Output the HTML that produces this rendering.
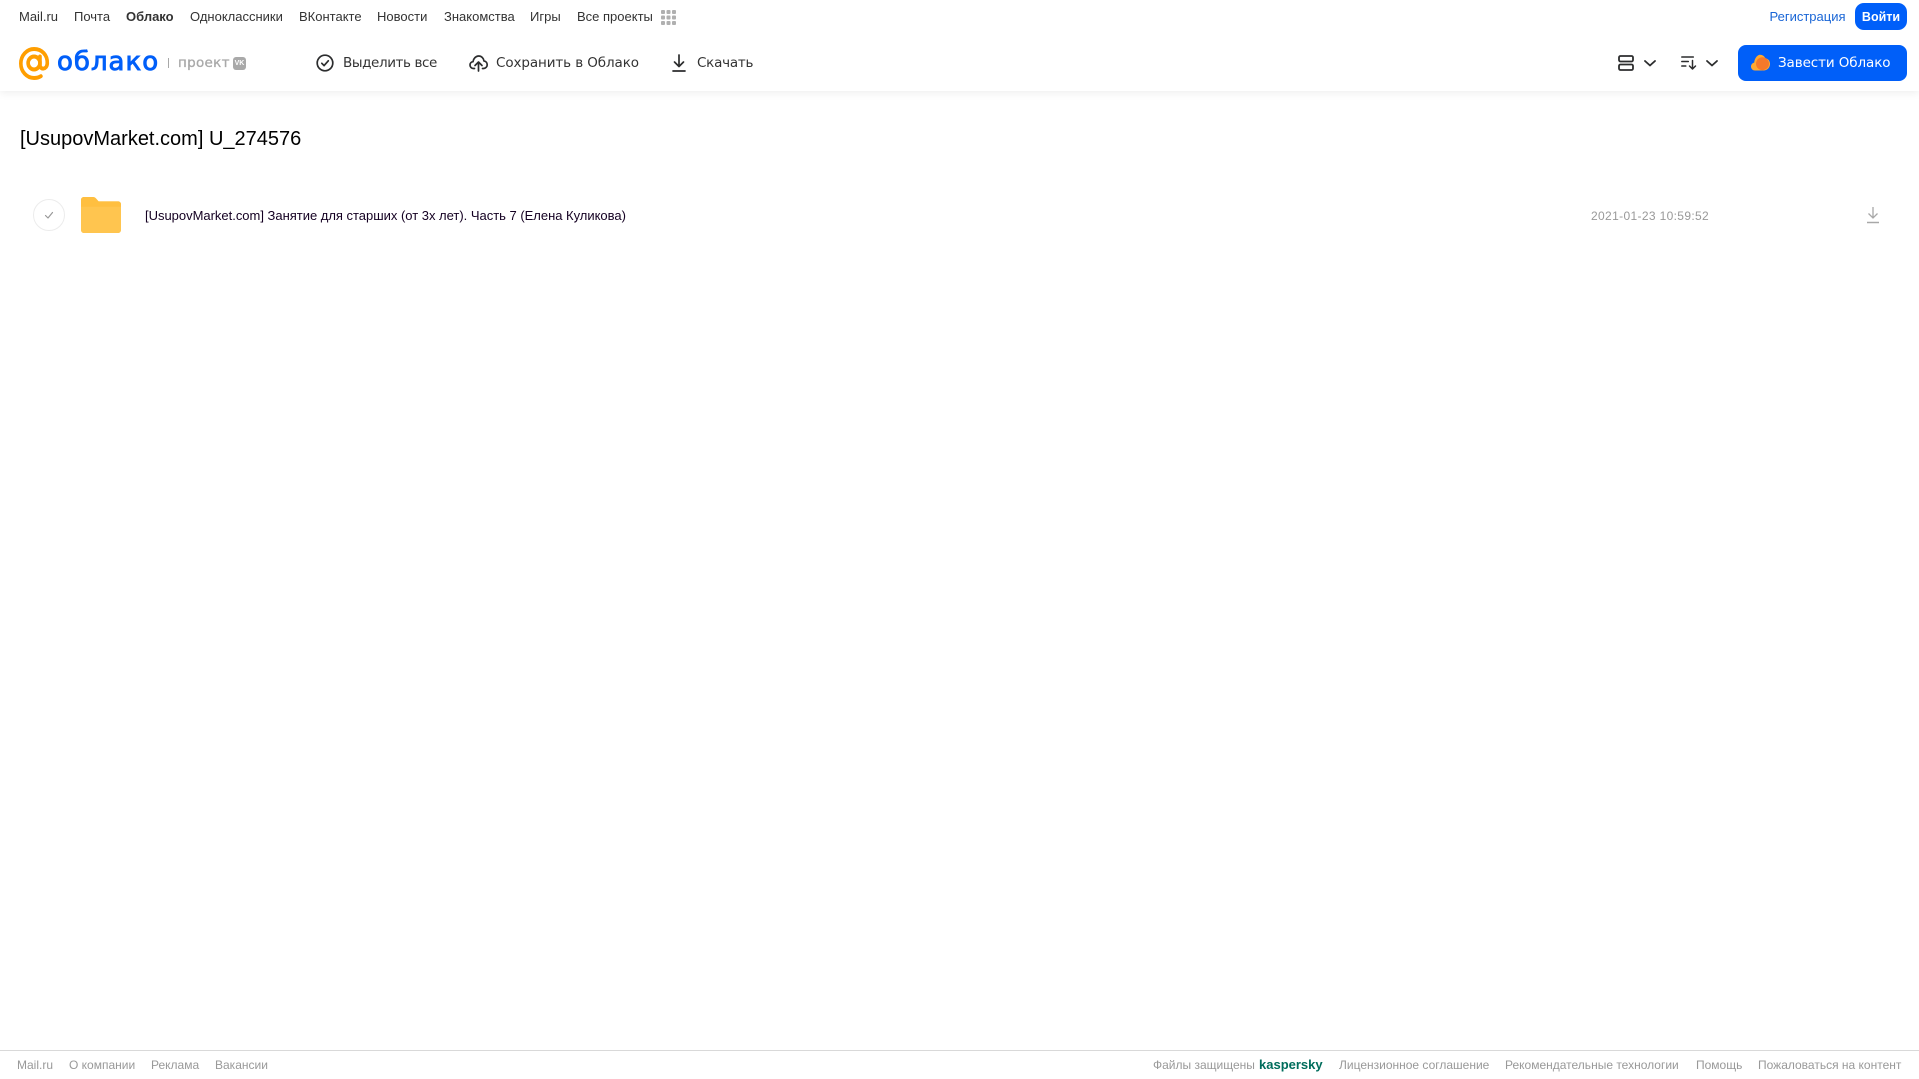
<!DOCTYPE html>
<html lang="ru"><head><meta charset="utf-8"><title>Облако</title>
<style>
html,body{margin:0;padding:0;background:#fff;width:1919px;height:1079px;overflow:hidden}
body{font-family:"Liberation Sans",sans-serif;position:relative}
.t{position:absolute;white-space:nowrap;line-height:20px}
.n{font-size:13px;color:#333;top:7px}
.a{color:#333;top:53px;font-family:"DejaVu Sans",sans-serif;font-size:13.5px}
.f{font-size:12px;color:#999;top:1055px}
svg{position:absolute;overflow:visible}
</style></head><body>
<div style="position:absolute;left:0;top:0;width:1919px;height:91px;background:#fff;box-shadow:0 2px 8px rgba(0,0,0,.07)"></div>

<span class="t n" style="left:19px">Mail.ru</span>
<span class="t n" style="left:74px">Почта</span>
<span class="t n" style="left:126px;font-weight:bold">Облако</span>
<span class="t n" style="left:190px">Одноклассники</span>
<span class="t n" style="left:299px">ВКонтакте</span>
<span class="t n" style="left:377px">Новости</span>
<span class="t n" style="left:444px">Знакомства</span>
<span class="t n" style="left:530px">Игры</span>
<span class="t n" style="left:577px">Все проекты</span>
<svg style="left:661px;top:10px" width="15" height="15" fill="#b0b0b0"><rect width="4" height="4" rx="1"/><rect x="5.500" width="4" height="4" rx="1"/><rect x="11" width="4" height="4" rx="1"/><rect y="5.500" width="4" height="4" rx="1"/><rect x="5.500" y="5.500" width="4" height="4" rx="1"/><rect x="11" y="5.500" width="4" height="4" rx="1"/><rect y="11" width="4" height="4" rx="1"/><rect x="5.500" y="11" width="4" height="4" rx="1"/><rect x="11" y="11" width="4" height="4" rx="1"/></svg>

<span class="t n" style="left:1769.500px;color:#1a66d6">Регистрация</span>
<div class="t" style="left:1855px;top:3px;width:52px;height:27px;line-height:29px;background:#005ff9;border-radius:9px;color:#fff;font-size:12.500px;font-weight:bold;text-align:center">Войти</div>

<svg style="left:19px;top:47px" width="31" height="34" viewBox="0 0 34 34" preserveAspectRatio="none" fill="none" stroke="#ff9e00" stroke-width="4"><circle cx="16.500" cy="16" r="6.500"/><path d="M23 9.500V18c0 5 7.500 5 8-1.500C31.500 8 25 2 16.500 2 8.500 2 2 8.500 2 16.500S8.500 31 16.500 31c3 0 5.500-.6 7.500-1.800" stroke-linecap="round"/></svg>
<span class="t" style="left:57px;top:47px;line-height:30px;font-family:'DejaVu Sans',sans-serif;font-size:26px;color:#005ff9;font-weight:normal;-webkit-text-stroke:.9px #005ff9;letter-spacing:1px">облако</span>
<div style="position:absolute;left:168px;top:58px;width:1px;height:10px;background:#a8a8a8"></div>
<span class="t" style="left:178px;top:53px;font-family:'DejaVu Sans',sans-serif;font-size:13.500px;font-weight:normal;-webkit-text-stroke:.3px #a9a9a9;letter-spacing:.3px;color:#a9a9a9">проект</span>
<div style="position:absolute;left:233px;top:57px;width:13px;height:13px;border-radius:3px;background:#a9a9a9;color:#fff;font-size:7px;font-weight:bold;line-height:13px;text-align:center">VK</div>

<svg style="left:316px;top:54px" width="18" height="18" fill="none" stroke="#2c2d2e" stroke-width="1.700"><circle cx="9" cy="9" r="7.800"/><path d="M5.800 9.300l2.300 2.300 4.200-4.800" stroke-linecap="round" stroke-linejoin="round"/></svg>
<span class="t a" style="left:343px;letter-spacing:-.4px">Выделить все</span>
<svg style="left:469px;top:54px" width="19" height="18" fill="none" stroke="#2c2d2e" stroke-width="1.700" stroke-linecap="round" stroke-linejoin="round"><path d="M5.500 14.500H4.500C2.300 14.500 1 12.800 1 11c0-1.800 1.300-3.100 3-3.300C4.500 4.500 6.800 2 9.700 2c2.800 0 5 2.200 5.300 5 2 .2 3.200 1.900 3.200 3.700 0 2-1.500 3.800-3.700 3.800h-1"/><path d="M9.500 17V8.500M6 11.500l3.500-3.500 3.500 3.500"/></svg>
<span class="t a" style="left:496px;letter-spacing:-.1px">Сохранить в Облако</span>
<svg style="left:671px;top:54px" width="16" height="18" fill="none" stroke="#2c2d2e" stroke-width="1.700" stroke-linecap="round" stroke-linejoin="round"><path d="M8 1v11M3.500 8L8 12.500 12.500 8M2 17h12"/></svg>
<span class="t a" style="left:697px;letter-spacing:-.25px">Скачать</span>

<svg style="left:1618px;top:55px" width="16" height="16" fill="none" stroke="#2c2d2e" stroke-width="1.800"><rect x="1" y="1" width="14" height="5.500" rx="1.500"/><rect x="1" y="9.500" width="14" height="5.500" rx="1.500"/></svg>
<svg style="left:1644px;top:60px" width="12" height="7" fill="none" stroke="#2c2d2e" stroke-width="1.800" stroke-linecap="round" stroke-linejoin="round"><path d="M1 1l5 4.500L11 1"/></svg>
<svg style="left:1681px;top:56px" width="16" height="14" fill="none" stroke="#2c2d2e" stroke-width="1.500" stroke-linecap="round" stroke-linejoin="round"><path d="M.8 1h11.500M.8 5.500h6.500M.8 10h4M11.500 4.500V13M8.500 10l3 3 3-3"/></svg>
<svg style="left:1706px;top:60px" width="12" height="7" fill="none" stroke="#2c2d2e" stroke-width="1.800" stroke-linecap="round" stroke-linejoin="round"><path d="M1 1l5 4.500L11 1"/></svg>

<div style="position:absolute;left:1738px;top:45px;width:169px;height:36px;background:#005ff9;border-radius:8px"></div>
<svg style="left:1751px;top:54px" width="19" height="17"><path d="M4 16.500C1.800 16.500 0 14.800 0 12.500c0-2 1.400-3.600 3.200-3.900C3.500 5.500 5 2 8.500.8 11 .5 13.500 2 14.300 4.300c2.700.3 4.700 2.500 4.700 5.600 0 3.700-2.800 6.600-6.500 6.600z" fill="#ffa930"/><circle cx="11.500" cy="9.700" r="6.500" fill="#f5792a"/></svg>
<span class="t a" style="left:1778px;color:#fff;letter-spacing:-.1px">Завести Облако</span>

<span class="t" style="left:20px;top:126px;line-height:26px;font-size:20px;color:#000">[UsupovMarket.com] U_274576</span>

<svg style="left:33px;top:199px" width="32" height="32" fill="none"><circle cx="16" cy="16" r="15.500" stroke="#ececec"/><path d="M12.500 16.500l2.500 2.500 4.500-5.500" stroke="#999" stroke-width="1.200" stroke-linecap="round" stroke-linejoin="round"/></svg>
<svg style="left:81px;top:197px" width="40" height="36" viewBox="0 0 41 37" preserveAspectRatio="none"><path d="M0 3C0 1.300 1.300 0 3 0h9c1.500 0 2.500.5 3.500 1.700L18 4.500h20c1.700 0 3 1.300 3 3V34c0 1.700-1.300 3-3 3H3c-1.700 0-3-1.300-3-3z" fill="#ffc54f"/><path d="M0 10h41v-2.500c0-1.700-1.300-3-3-3H18L15.500 1.700C14.500.5 13.500 0 12 0H3C1.300 0 0 1.300 0 3z" fill="#ffbf40"/></svg>
<span class="t" style="left:145px;top:206px;font-size:13px;color:#140022;letter-spacing:-.015px">[UsupovMarket.com] Занятие для старших (от 3х лет). Часть 7 (Елена Куликова)</span>
<span class="t" style="left:1591px;top:206px;font-size:12px;color:#999;letter-spacing:.35px">2021-01-23 10:59:52</span>
<svg style="left:1866px;top:206px" width="14" height="18" fill="none" stroke="#a8a8a8" stroke-width="1.300"><path d="M7 1v11M2.500 7.500L7 12l4.500-4.500"/><path d="M1 16.500h12" stroke-width="1.500"/></svg>

<div style="position:absolute;left:0;top:1050px;width:1919px;height:1px;background:#d9d9d9"></div>
<span class="t f" style="left:17px">Mail.ru</span>
<span class="t f" style="left:69px">О компании</span>
<span class="t f" style="left:151px">Реклама</span>
<span class="t f" style="left:215px">Вакансии</span>
<span class="t f" style="left:1153px">Файлы защищены</span>
<span class="t f" style="left:1259px;color:#006d5c;font-weight:bold;font-size:13px">kaspersky</span>
<span class="t f" style="left:1339px">Лицензионное соглашение</span>
<span class="t f" style="left:1505px">Рекомендательные технологии</span>
<span class="t f" style="left:1696px">Помощь</span>
<span class="t f" style="left:1758px">Пожаловаться на контент</span>
</body></html>
